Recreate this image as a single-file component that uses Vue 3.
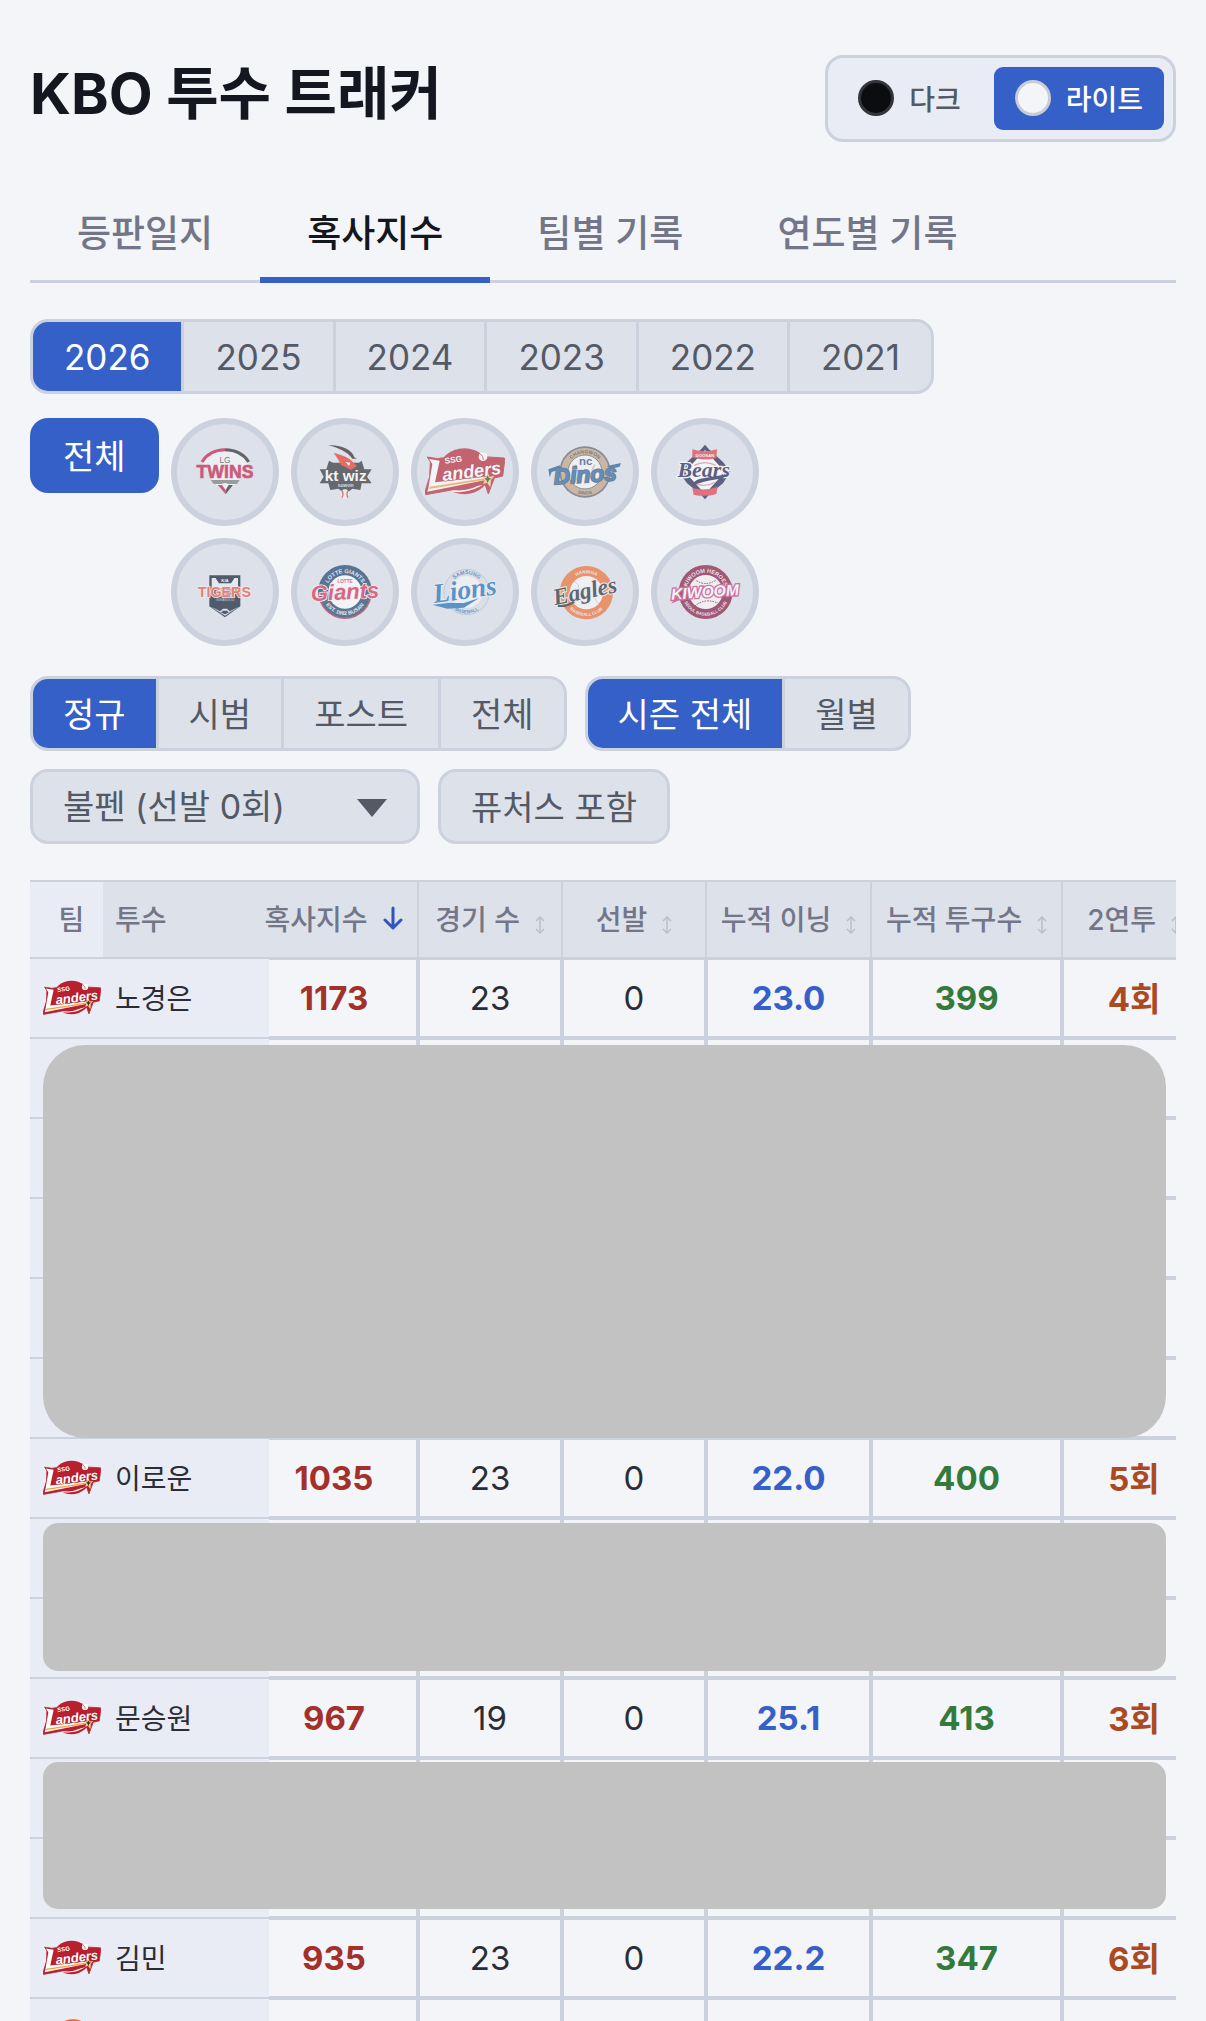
<script setup>
import { ref } from 'vue';

const theme = ref('light');
const tab = ref('혹사지수');
const year = ref(2026);
const team = ref('all');
const gameType = ref('정규');
const period = ref('시즌 전체');
const role = ref('bullpen');
const futures = ref(false);

const tabs = ['등판일지', '혹사지수', '팀별 기록', '연도별 기록'];
const years = [2026, 2025, 2024, 2023, 2022, 2021];
const gameTypes = ['정규', '시범', '포스트', '전체'];
const periods = ['시즌 전체', '월별'];

const teams = [
  { id: 'lg', name: 'LG' },
  { id: 'kt', name: 'KT' },
  { id: 'ssg', name: 'SSG' },
  { id: 'nc', name: 'NC' },
  { id: 'doosan', name: '두산' },
  { id: 'kia', name: 'KIA' },
  { id: 'lotte', name: '롯데' },
  { id: 'samsung', name: '삼성' },
  { id: 'hanwha', name: '한화' },
  { id: 'kiwoom', name: '키움' },
];

const columns = ['경기 수', '선발', '누적 이닝', '누적 투구수', '2연투'];

const hidden = (count) => Array.from({ length: count }, () => ({}));

const rows = [
  { team: 'ssg', name: '노경은', score: 1173, games: 23, starts: 0, innings: '23.0', pitches: 399, streak: '4회' },
  ...hidden(5),
  { team: 'ssg', name: '이로운', score: 1035, games: 23, starts: 0, innings: '22.0', pitches: 400, streak: '5회' },
  ...hidden(2),
  { team: 'ssg', name: '문승원', score: 967, games: 19, starts: 0, innings: '25.1', pitches: 413, streak: '3회' },
  ...hidden(2),
  { team: 'ssg', name: '김민', score: 935, games: 23, starts: 0, innings: '22.2', pitches: 347, streak: '6회' },
  { team: 'hanwha' },
];

const HEAD = 78;
const ROW = 80;

// covers laid over the hidden rows
const covers = [
  { row: 1, span: 5, before: 7, after: 0, round: true },
  { row: 7, span: 2, before: 5, after: 7 },
  { row: 10, span: 2, before: 4, after: 9 },
];

const coverStyle = (cover) => ({
  top: `${HEAD + cover.row * ROW + cover.before}px`,
  height: `${cover.span * ROW - cover.before - cover.after}px`,
});
</script>

<template>
  <svg class="symbols" aria-hidden="true">
    <defs>
      <symbol id="logo-lg" viewBox="-120 -90 240 180">
        <path d="M-68-28C-50-78 52-78 72-28L40 28 0 64-36 28Z" fill="#fff" opacity=".7" />
        <path d="M-69-30Q-48-66 0-67" fill="none" stroke="#c4123f" stroke-width="9" />
        <path d="M0-67Q50-66 71-30" fill="none" stroke="#222" stroke-width="9" />
        <text x="0" y="-27" class="sans" font-size="25" text-anchor="middle" fill="#444">LG</text>
        <text x="0" y="19" class="sans" font-size="53" font-weight="700" text-anchor="middle" fill="#c4123f" stroke="#c4123f" stroke-width="2">TWINS</text>
        <path d="M-43 24H44L36 36H12L0 33-12 36H-34Z" fill="#777" />
        <path d="M-22 39H-9L2 54V67Z" fill="#c4123f" />
        <path d="M24 39H11L2 54V67Z" fill="#222" />
      </symbol>

      <symbol id="logo-kt" viewBox="-120 -90 240 180">
        <path d="M-48-34-36-28H42L50-34 58-8H80L66 14 80 34H50L46 54 22 50 2 66-20 50-44 54-50 34H-76L-64 14-76-8H-56Z" fill="#26282b" />
        <path d="M-50-80C-10-82 22-66 28-44L36-40 22-40C8-60-18-72-50-80Z" fill="#222" />
        <path d="M-34-58C-6-50 12-44 26-28L36-18 18-6-12-22-22-40Z" fill="#e8301f" />
        <path d="M2-30 16-28 12-18Z" fill="#fff" />
        <text x="2" y="27" class="sans" font-size="46" font-weight="700" text-anchor="middle" fill="#fff">kt wiz</text>
        <text x="2" y="44" class="sans" font-size="15" font-weight="700" text-anchor="middle" fill="#ddd">suwon</text>
        <circle cx="0" cy="66" r="14" fill="#f7eeee" />
        <path d="M-9 56Q-3 66-9 77M9 56Q3 66 9 77" fill="none" stroke="#d4384b" stroke-width="4" />
      </symbol>

      <symbol id="logo-ssg" viewBox="-120 -90 240 180">
        <ellipse cx="-2" cy="-2" rx="78" ry="69" fill="#b8202f" />
        <path d="M-60 50Q4 74 68 26" fill="none" stroke="#fff" stroke-width="5" />
        <path d="M-113-45-82-40-72-42 54-46 118-42 119-34 113 12 88 18 70 66 60 36-118 68-120 60-106 14-104-30Z" fill="#b8202f" stroke="#b8202f" stroke-width="3" stroke-linejoin="round" />
        <path d="M-108-39-76-34-90 31 58 14 62 24-113 59-110 48-98-24Z" fill="#fff" />
        <path d="M-106 44 58 19 60 24-108 51Z" fill="#f0a63c" />
        <g transform="rotate(-7)">
          <text x="20" y="19" class="sans" font-size="54" font-weight="700" font-style="italic" text-anchor="middle" fill="#fff" stroke="#a31a2a" stroke-width="4" paint-order="stroke">anders</text>
          <text x="-30" y="-32" class="sans" font-size="25" font-weight="700" text-anchor="middle" fill="#fff">SSG</text>
        </g>
        <circle cx="54" cy="-46" r="13" fill="#fff" />
        <path d="M46-54Q55-48 55-36" fill="none" stroke="#d4384b" stroke-width="3" />
        <path d="M68 0 73 14 88 12 78 24 76 46 66 32 54 36 60 23 52 14 64 14Z" fill="#f6d68a" />
        <path d="M68 10 72 18 80 20 72 24 68 34 64 24 58 20 64 18Z" fill="#3d3a22" />
      </symbol>

      <symbol id="logo-nc" viewBox="-120 -90 240 180">
        <circle r="77" fill="#55606e" />
        <circle r="72" fill="#c2a27b" />
        <circle r="51" fill="#f7f7f7" stroke="#55606e" stroke-width="3" />
        <path d="M-30-22Q-10 4-34 34M30-22Q10 4 34 34" fill="none" stroke="#b9bec6" stroke-width="4" />
        <path id="nc-top" d="M-56 0A56 56 0 0 1 56 0" fill="none" />
        <text class="sans" font-size="15" font-weight="700" fill="#3c4554" text-anchor="middle"><textPath href="#nc-top" startOffset="50%">CHANGWON</textPath></text>
        <path id="nc-bottom" d="M-68 0A68 68 0 0 0 68 0" fill="none" />
        <text class="sans" font-size="14" font-weight="700" fill="#3c4554" text-anchor="middle"><textPath href="#nc-bottom" startOffset="50%">DINOS</textPath></text>
        <text x="2" y="-20" class="sans" font-size="34" font-weight="700" text-anchor="middle" fill="#1d4a80">nc</text>
        <path d="M-110-8-76-20-70-10-100 0-106 16ZM66-18 108-27 104-16 76-9Z" fill="#1f568f" />
        <g transform="rotate(-4)">
          <text x="0" y="31" class="sans" font-size="68" font-weight="700" font-style="italic" text-anchor="middle" fill="#2461a0" stroke="#344a66" stroke-width="5" paint-order="stroke">Dinos</text>
        </g>
      </symbol>

      <symbol id="logo-doosan" viewBox="-120 -90 240 180">
        <path d="M0-82 12-68 54-30 76 0 54 34 12 68 0 82-12 68-54 34-78 0-54-30-12-68Z" fill="#1a1f4d" />
        <path d="M0-66 60 0 0 66-60 0Z" fill="#fff" />
        <path d="M-38-68Q0-56 36-68L34-42Q0-32-38-44ZM-38 48Q0 58 38 44L34 66Q0 76-34 68Z" fill="#e23440" />
        <path d="M-32-20Q0-36 32-20M-32 34Q0 48 32 30" fill="none" stroke="#d88b92" stroke-width="4" />
        <text x="-4" y="15" class="script" font-size="66" font-weight="700" font-style="italic" text-anchor="middle" fill="#171c4c" stroke="#fff" stroke-width="7" paint-order="stroke">Bears</text>
        <path d="M74 5Q34 12-14 20-38 27-36 42-12 28 36 22 62 18 74 5Z" fill="#171c4c" />
        <text x="0" y="-46" class="sans" font-size="13" font-weight="700" text-anchor="middle" fill="#fff">DOOSAN</text>
      </symbol>

      <symbol id="logo-kia" viewBox="-120 -90 240 180">
        <path d="M-47-50H46V43L0 76-47 43Z" fill="#07142a" />
        <path d="M-40-42H-28L-18-26H18L28-42H39V-12H-40Z" fill="#e8ebf0" />
        <path d="M-28-43H28L18-28H-18Z" fill="#07142a" />
        <text x="0" y="-31" class="sans" font-size="13" font-weight="700" text-anchor="middle" fill="#fff">KIA</text>
        <text x="-2" y="14" class="sans" font-size="43" font-weight="700" text-anchor="middle" fill="#f04a32" stroke="#f3f4f8" stroke-width="5" paint-order="stroke">TIGERS</text>
        <text x="0" y="28" class="sans" font-size="11" text-anchor="middle" fill="#bfc5cf">GWANGJU</text>
        <path d="M-42 44-14 58-6 50H6L14 58 42 44 0 71Z" fill="#f3f4f8" opacity=".9" />
        <path d="M-34 52-12 62-6 56H6L12 62 34 50 0 67Z" fill="#07142a" />
      </symbol>

      <symbol id="logo-lotte" viewBox="-120 -90 240 180">
        <path d="M-81 0A81 81 0 0 1 81 0Z" fill="#123a63" />
        <path d="M-81 0A81 81 0 0 0 81 0Z" fill="#a9294a" />
        <path d="M-76 0A76 76 0 0 0 76 0Z" fill="#173d66" />
        <circle r="50" fill="#fff" />
        <path id="lotte-top" d="M-57 0A57 57 0 0 1 57 0" fill="none" />
        <text class="sans" font-size="17" font-weight="700" fill="#e5edf5" text-anchor="middle"><textPath href="#lotte-top" startOffset="50%">LOTTE GIANTS</textPath></text>
        <path id="lotte-bottom" d="M-69 0A69 69 0 0 0 69 0" fill="none" />
        <text class="sans" font-size="16" font-weight="700" fill="#e5edf5" text-anchor="middle"><textPath href="#lotte-bottom" startOffset="50%">EST. 1982 BUSAN</textPath></text>
        <text x="0" y="-28" class="sans" font-size="14" font-weight="700" text-anchor="middle" fill="#d33250">LOTTE</text>
        <g transform="rotate(-3)">
          <text x="0" y="22" class="sans" font-size="66" font-weight="700" font-style="italic" text-anchor="middle" fill="#d7264c" stroke="#f4f2f6" stroke-width="5" paint-order="stroke">Giants</text>
        </g>
      </symbol>

      <symbol id="logo-samsung" viewBox="-120 -90 240 180">
        <circle cx="5" cy="0" r="68" fill="#d9dde4" stroke="#b5bcc8" stroke-width="3" />
        <circle cx="5" cy="0" r="48" fill="#f4f5f8" />
        <path id="samsung-top" d="M-48 0A53 53 0 0 1 58 0" fill="none" />
        <text class="sans" font-size="16" font-weight="700" fill="#1d70b8" text-anchor="middle"><textPath href="#samsung-top" startOffset="50%">SAMSUNG</textPath></text>
        <path id="samsung-bottom" d="M-59 0A64 64 0 0 0 69 0" fill="none" />
        <text class="sans" font-size="14" font-weight="700" fill="#1d70b8" text-anchor="middle"><textPath href="#samsung-bottom" startOffset="50%">BASEBALL</textPath></text>
        <g transform="rotate(-8)">
          <text x="0" y="20" class="script" font-size="82" font-weight="700" font-style="italic" text-anchor="middle" fill="#1769b5" stroke="#f4f6fa" stroke-width="5" paint-order="stroke">Lions</text>
          <path d="M-102 24-54 26-8 32 40 24-10 46-60 42Z" fill="#1769b5" />
        </g>
      </symbol>

      <symbol id="logo-hanwha" viewBox="-120 -90 240 180">
        <circle cx="4" cy="2" r="80" fill="#f0682c" />
        <circle cx="4" cy="2" r="50" fill="#f8f8f8" />
        <path d="M-32-32Q-2-16-32 36M38-36Q12-4 38 34" fill="none" stroke="#c6c9cf" stroke-width="3" />
        <path id="hanwha-top" d="M-54 2A58 58 0 0 1 62 2" fill="none" />
        <text class="sans" font-size="14" font-weight="700" fill="#fbe4d8" text-anchor="middle"><textPath href="#hanwha-top" startOffset="50%">HANWHA</textPath></text>
        <path id="hanwha-bottom" d="M-66 2A70 70 0 0 0 74 2" fill="none" />
        <text class="sans" font-size="13" font-weight="700" fill="#fbe4d8" text-anchor="middle"><textPath href="#hanwha-bottom" startOffset="50%">BASEBALL CLUB</textPath></text>
        <g transform="rotate(-12)">
          <text x="0" y="20" class="script" font-size="70" font-weight="700" font-style="italic" text-anchor="middle" fill="#1b2530" stroke="#eef0f4" stroke-width="6" paint-order="stroke">Eagles</text>
          <path d="M-88 24Q-64 32-38 22" fill="none" stroke="#1b2530" stroke-width="6" />
        </g>
      </symbol>

      <symbol id="logo-kiwoom" viewBox="-120 -90 240 180">
        <circle cx="2" cy="0" r="81" fill="#7f1236" />
        <circle cx="2" cy="0" r="51" fill="#faf7f8" />
        <path d="M-26-34Q2-16 34-36M-30 42Q0 16 40 34" fill="none" stroke="#7f1236" stroke-width="3" stroke-dasharray="5 3" />
        <path id="kiwoom-top" d="M-56 0A58 58 0 0 1 60 0" fill="none" />
        <text class="sans" font-size="17" font-weight="700" fill="#f5dfe7" text-anchor="middle"><textPath href="#kiwoom-top" startOffset="50%">KIWOOM HEROES</textPath></text>
        <path id="kiwoom-bottom" d="M-69 0A71 71 0 0 0 73 0" fill="none" />
        <text class="sans" font-size="13" font-weight="700" fill="#f5dfe7" text-anchor="middle"><textPath href="#kiwoom-bottom" startOffset="50%">SEOUL BASEBALL CLUB</textPath></text>
        <g transform="rotate(-4)">
          <text x="0" y="16" class="sans" font-size="47" font-weight="700" font-style="italic" text-anchor="middle" fill="#fff" stroke="#c83379" stroke-width="8" paint-order="stroke">KIWOOM</text>
          <path d="M-104 28-84 4-76 18Z" fill="#c83379" />
        </g>
      </symbol>
    </defs>
  </svg>

  <div class="page">
    <header class="top">
      <h1>KBO 투수 트래커</h1>
      <div class="theme">
        <button type="button" :class="{ active: theme === 'dark' }" @click="theme = 'dark'">
          <span class="dot dark"></span>다크
        </button>
        <button type="button" :class="{ active: theme === 'light' }" @click="theme = 'light'">
          <span class="dot light"></span>라이트
        </button>
      </div>
    </header>

    <nav class="tabs">
      <button v-for="item in tabs" :key="item" type="button" :class="{ active: tab === item }" @click="tab = item">
        {{ item }}
      </button>
    </nav>

    <div class="segment years">
      <button v-for="item in years" :key="item" type="button" :class="{ active: year === item }" @click="year = item">
        {{ item }}
      </button>
    </div>

    <div class="teams">
      <button type="button" class="all" :class="{ active: team === 'all' }" @click="team = 'all'">전체</button>
      <div class="team-grid">
        <button
          v-for="item in teams"
          :key="item.id"
          type="button"
          class="team"
          :class="{ active: team === item.id }"
          :aria-label="item.name"
          @click="team = item.id"
        >
          <svg width="80" height="60"><use :href="`#logo-${item.id}`" /></svg>
        </button>
      </div>
    </div>

    <div class="filters">
      <div class="segment">
        <button v-for="item in gameTypes" :key="item" type="button" :class="{ active: gameType === item }" @click="gameType = item">
          {{ item }}
        </button>
      </div>
      <div class="segment">
        <button v-for="item in periods" :key="item" type="button" :class="{ active: period === item }" @click="period = item">
          {{ item }}
        </button>
      </div>
    </div>

    <div class="filters">
      <div class="role">
        <select v-model="role" aria-label="보직">
          <option value="bullpen">불펜 (선발 0회)</option>
          <option value="starter">선발</option>
          <option value="all">전체</option>
        </select>
        <svg class="caret" width="30" height="18" viewBox="0 0 30 18"><path d="M0 0H30L15 18Z" fill="#545966" /></svg>
      </div>
      <button type="button" class="toggle" :class="{ active: futures }" @click="futures = !futures">퓨처스 포함</button>
    </div>

    <div class="board">
      <div class="scroller">
        <table>
          <colgroup>
            <col class="c-team" />
            <col class="c-name" />
            <col class="c-pin" />
            <col class="c-score" />
            <col class="c-count" />
            <col class="c-count" />
            <col class="c-innings" />
            <col class="c-pitches" />
            <col class="c-count" />
          </colgroup>
          <thead>
            <tr>
              <th class="team-head">팀</th>
              <th class="name-head">투수</th>
              <th colspan="2" class="score-head">
                <button type="button">
                  혹사지수
                  <svg width="20" height="24" viewBox="0 0 20 24">
                    <path d="M10 2V21M2 14L10 22L18 14" fill="none" stroke="#2f55c0" stroke-width="3" stroke-linecap="round" stroke-linejoin="round" />
                  </svg>
                </button>
              </th>
              <th v-for="column in columns" :key="column">
                <button type="button">
                  {{ column }}
                  <svg class="both" width="10" height="18" viewBox="0 0 10 18">
                    <path d="M5 1V17M1 5L5 1L9 5M1 13L5 17L9 13" fill="none" stroke="#b9bfcd" stroke-width="1.5" />
                  </svg>
                </button>
              </th>
            </tr>
          </thead>
          <tbody>
            <tr v-for="(row, index) in rows" :key="index">
              <td class="pinned logo">
                <svg v-if="row.team" width="58" height="44"><use :href="`#logo-${row.team}`" /></svg>
              </td>
              <td class="pinned name" colspan="2">{{ row.name }}</td>
              <td class="score">{{ row.score }}</td>
              <td>{{ row.games }}</td>
              <td>{{ row.starts }}</td>
              <td class="innings">{{ row.innings }}</td>
              <td class="pitches">{{ row.pitches }}</td>
              <td class="streak">{{ row.streak }}</td>
            </tr>
          </tbody>
        </table>
      </div>
      <div v-for="cover in covers" :key="cover.row" class="cover" :class="{ round: cover.round }" :style="coverStyle(cover)"></div>
    </div>
  </div>
</template>

<style>
body {
  background: #f3f5f9;
}
</style>

<style scoped>
.symbols {
  position: absolute;
  width: 0;
  height: 0;
}

.sans {
  font-family: 'Liberation Sans', sans-serif;
}

.script {
  font-family: 'Liberation Serif', serif;
}

.page {
  box-sizing: border-box;
  height: 100vh;
  padding: 55px 30px 0;
  overflow-x: hidden;
  overflow-y: auto;
  scrollbar-width: none;
  background: #f3f5f9;
  color: #2a2d36;
  font-family: Inter, 'Noto Sans CJK KR', sans-serif;
}

button,
select {
  margin: 0;
  padding: 0;
  border: 0;
  background: none;
  color: inherit;
  font: inherit;
  white-space: nowrap;
  cursor: pointer;
}

.top {
  display: flex;
  justify-content: space-between;
  align-items: flex-start;
}

h1 {
  margin: 0;
  color: #141620;
  font-size: 57px;
  line-height: 78px;
  font-weight: 700;
}

.theme {
  display: flex;
  gap: 12px;
  padding: 9px;
  border: 3px solid #ccd1de;
  border-radius: 18px;
  background: #e9ecf5;
}

.theme button {
  display: flex;
  align-items: center;
  gap: 15px;
  height: 63px;
  padding: 0 21px 2px;
  border-radius: 9px;
  color: #545966;
  font-size: 28px;
  font-weight: 500;
}

.theme button.active {
  background: #3560c8;
  color: #fff;
}

.dot {
  box-sizing: border-box;
  width: 36px;
  height: 36px;
  border: 3px solid #c8ccd6;
  border-radius: 50%;
  background: #f3f5f9;
}

.dot.dark {
  border-color: #33353b;
  background: #0c0d11;
}

.tabs {
  display: flex;
  margin: 39px 0 36px;
  box-shadow: inset 0 -3px #ccd1de;
}

.tabs button {
  height: 102px;
  padding: 4px 47px 0;
  border-bottom: 6px solid transparent;
  color: #727688;
  font-size: 37px;
  font-weight: 500;
}

.tabs button.active {
  border-color: #3560c8;
  color: #141620;
}

.segment {
  display: inline-flex;
  overflow: hidden;
  border: 3px solid #ccd1de;
  border-radius: 18px;
  background: #dde1ea;
}

.segment button {
  height: 69px;
  padding: 0 30px 3px;
  color: #545966;
  font-size: 34px;
}

.years button {
  padding: 0 31px;
  font-size: 35px;
}

.segment button + button {
  border-left: 3px solid #ccd1de;
}

.segment button.active,
.toggle.active {
  background: #3560c8;
  color: #fff;
}

.teams {
  display: flex;
  align-items: flex-start;
  gap: 12px;
  margin: 24px 0 30px;
}

.all {
  height: 75px;
  padding: 0 33px 3px;
  border-radius: 18px;
  background: #dde1ea;
  color: #545966;
  font-size: 34px;
}

.all.active {
  background: #3560c8;
  color: #fff;
}

.team-grid {
  display: grid;
  grid-template-columns: repeat(5, 108px);
  gap: 12px;
}

.team {
  display: flex;
  justify-content: center;
  align-items: center;
  height: 108px;
  border: 6px solid #ccd1de;
  border-radius: 50%;
  background: #dde1ea;
}

.team.active {
  border-color: #3560c8;
}

.team svg {
  flex: none;
  opacity: 0.65;
}

.filters {
  display: flex;
  flex-wrap: wrap;
  gap: 18px;
  margin-bottom: 18px;
}

.role {
  position: relative;
}

select,
.toggle {
  box-sizing: border-box;
  height: 75px;
  padding: 0 30px;
  border: 3px solid #ccd1de;
  border-radius: 18px;
  background: #dde1ea;
  color: #545966;
  font-size: 34px;
}

select {
  width: 390px;
  appearance: none;
}

.toggle {
  padding-bottom: 3px;
}

.caret {
  position: absolute;
  top: 30px;
  right: 33px;
  pointer-events: none;
}

.board {
  position: relative;
  margin-top: 36px;
}

.scroller {
  overflow-x: auto;
  scrollbar-width: none;
}

table {
  width: 1176px;
  table-layout: fixed;
  border-collapse: separate;
  border-spacing: 0;
}

.c-team {
  width: 73px;
}

.c-name {
  width: 147px;
}

.c-pin {
  width: 19px;
}

.c-score {
  width: 149px;
}

.c-count {
  width: 144px;
}

.c-innings {
  width: 165px;
}

.c-pitches {
  width: 191px;
}

th,
td {
  box-sizing: border-box;
  padding: 0;
  white-space: nowrap;
}

th {
  height: 78px;
  padding-bottom: 4px;
  border: 1px solid #ccd1de;
  border-top-width: 2px;
  background: #dde1ea;
  color: #727688;
  font-size: 28px;
  font-weight: 500;
}

th button {
  display: inline-flex;
  align-items: center;
  gap: 15px;
}

.both {
  margin-top: 14px;
}

.team-head {
  padding-left: 10px;
  border-left: 0;
  border-right: 0;
  background: #e9ecf5;
}

.name-head {
  padding-left: 12px;
  border-left: 0;
  border-right: 0;
  text-align: left;
}

.score-head {
  border-left: 0;
}

td {
  height: 80px;
  border: 2px solid #ccd1de;
  font-size: 33px;
  text-align: center;
}

.pinned {
  border-width: 1px 0;
  background: #e9ecf5;
}

.logo {
  padding-left: 13px;
}

.logo svg {
  display: block;
}

.name {
  padding-bottom: 3px;
  padding-left: 12px;
  font-size: 28px;
  text-align: left;
}

.score {
  padding-right: 17px;
  border-left: 0;
  color: #a3302a;
}

.innings {
  color: #3560c8;
}

.pitches {
  color: #347a3c;
}

.streak {
  padding-bottom: 3px;
  color: #ab4a22;
}

.score,
.innings,
.pitches,
.streak {
  font-weight: 700;
}

.cover {
  position: absolute;
  left: 13px;
  right: 10px;
  border-radius: 15px;
  background: #c2c2c2;
}

.cover.round {
  border-radius: 42px;
}
</style>
